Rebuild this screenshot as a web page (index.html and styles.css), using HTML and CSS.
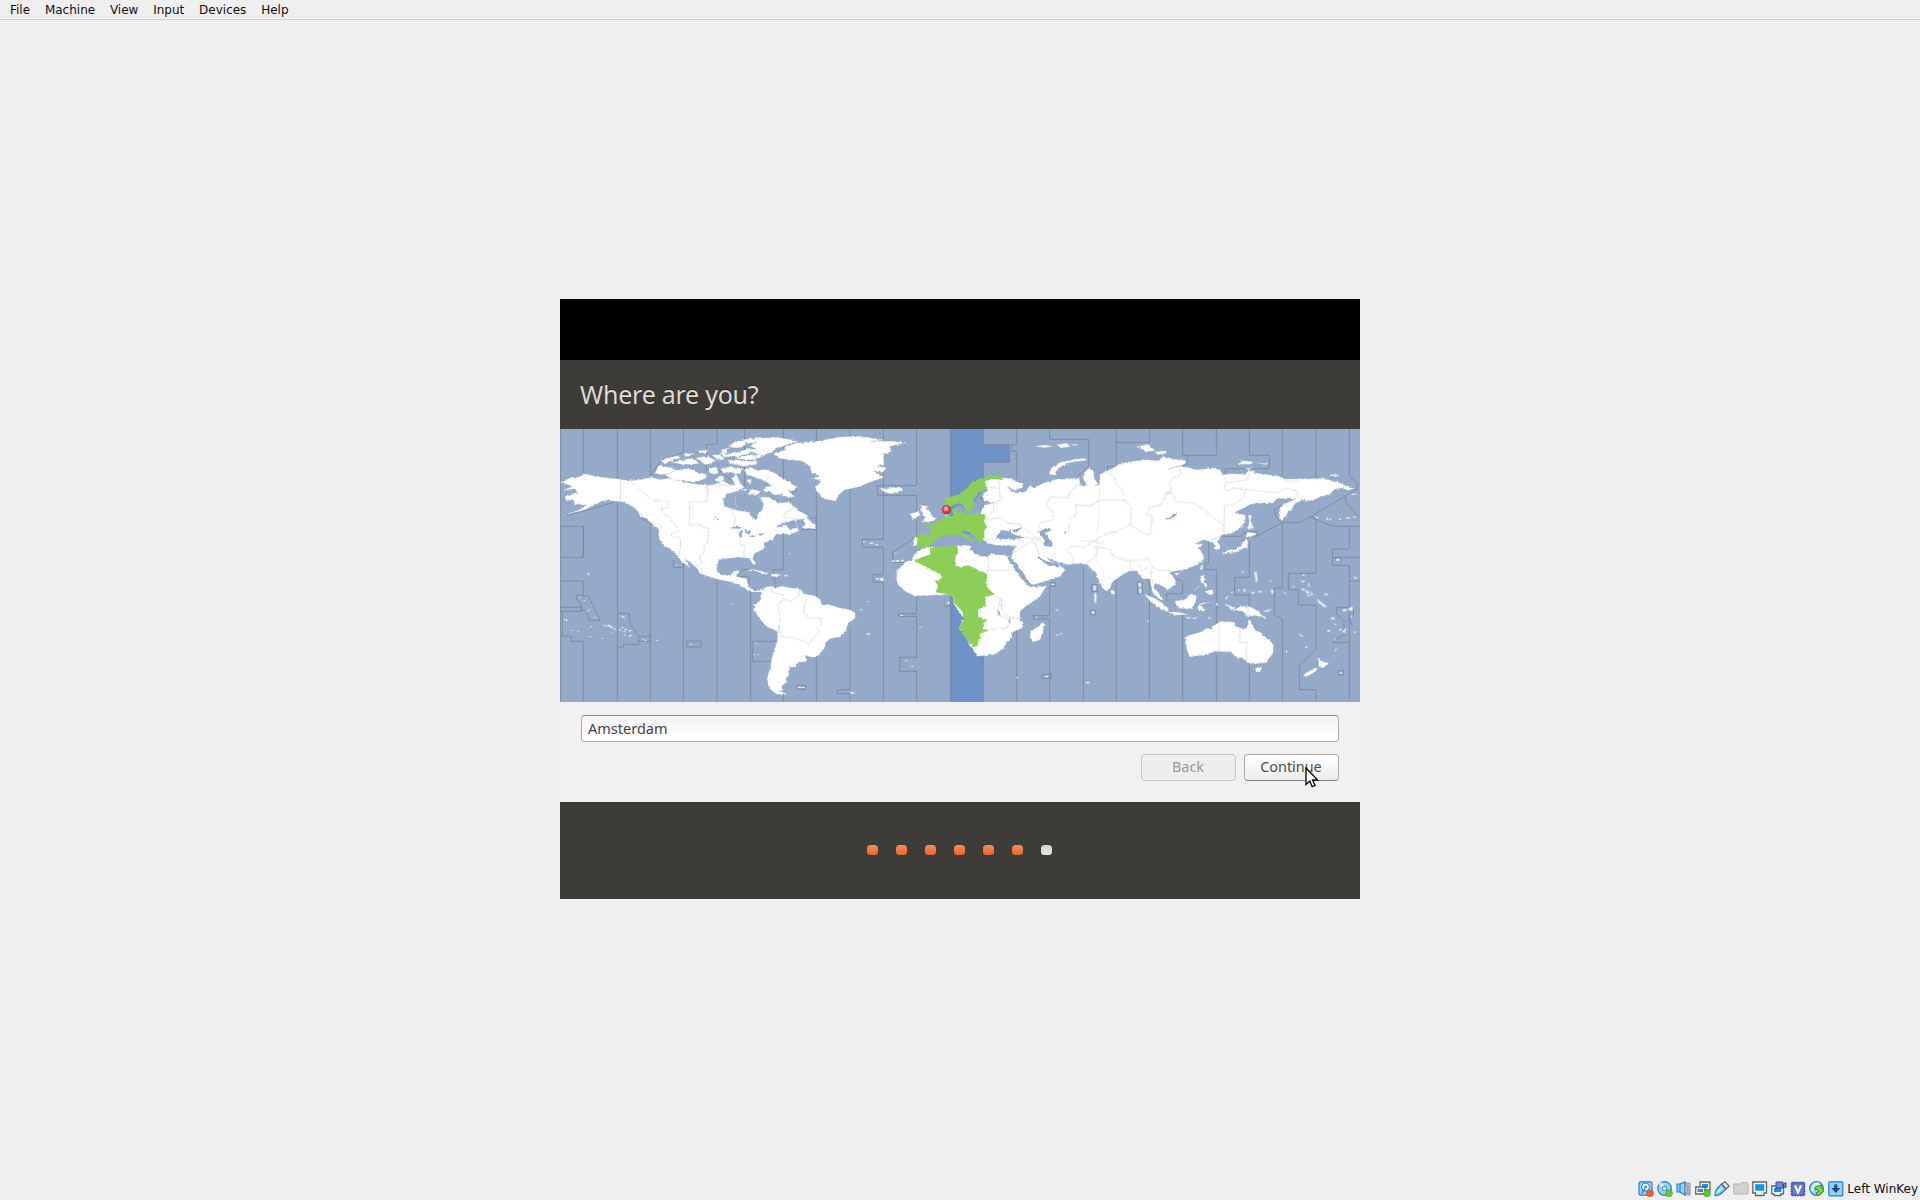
FILE: index.html
```html
<!DOCTYPE html>
<html lang="en">
<head>
<meta charset="utf-8">
<title>Where are you?</title>
<link rel="stylesheet" href="styles.css">
</head>
<body>
<nav class="menubar"><span>File</span><span>Machine</span><span>View</span><span>Input</span><span>Devices</span><span>Help</span></nav>
<main class="workspace">
<section class="guest">
<div class="blank"></div>
<header class="heading"><h1>Where are you?</h1></header>
<svg class="map" width="800" height="273" viewBox="0 3 2400 819">
<defs><filter id="coast" x="-2%" y="-2%" width="104%" height="104%" color-interpolation-filters="sRGB"><feTurbulence type="fractalNoise" baseFrequency=".12" numOctaves="2" seed="4"/><feDisplacementMap in="SourceGraphic" scale="9" xChannelSelector="R" yChannelSelector="G"/></filter></defs>
<rect class="sea" y="3" width="2400" height="820"/>
<path class="zone" d="M1171 0H1270V50H1348V103H1270V823H1171Z"/>
<!-- time zone limits -->
<g class="limits">
<path d="M1171 3V823M1270 3V50M1270 103V823M1270 50H1348V103H1270"/>
<path d="M1 3V823M70 3V140M70 295V388M1 295H70V388H1M1 459H70V503M1 538H64V550H1M7 550V625H34V640H70V823M50 503H84L121 577H88L80 550L64 545V525L50 517ZM172 3V823M172 556H208V584L236 625V649H190V657H172M236 625H271V640H236M271 3V150M271 275V823M271 145L302 98L370 73V3M370 395V823M340 395V418H370M380 639H424V657H380ZM471 3V49H439V125L475 125L525 165M471 455V823M554 3V175M572 490V823M577 640H650M577 640V700H632M670 3V148L710 180L690 205V225M670 315V425H638L646 470M670 790V823M710 772H737V784H710ZM769 3V38M572 425H548L530 445H568V480M5 265L60 252L165 222M750 270H769V304H725M225 240L240 270L300 300"/>
<path d="M769 180V505M769 680V823M870 3V33M870 180V545M870 600V785H832V797H870V823M970 3V35M970 65V334H907V358H970V440H940V463H970V823M1070 3V173H952V202H1070V325L998 373V404H1035M1070 500V557H1016V565H1070V688H1019V730H1070V823M1152 534H1171"/>
<path d="M1370 3V50H1355V70H1370V152M1370 605V823M1469 3V34H1586V115L1553 145V157M1469 475V563H1420V573H1469V823M1469 464H1486V475H1469M1570 415V823M1445 739H1475V751H1445ZM1594 470H1612V490H1594ZM1592 546H1606V561H1592Z"/>
<path d="M1669 3V43H1769V3M1669 43V115H1642V130M1669 445V823M1768 450V823M1868 3V82H1969V3M1868 82H1882V105L1865 118M1868 555V823M1840 450L1868 460V497H1820V520M1732 463H1747V497H1732ZM1969 680V823M1969 600V425H1936V405H1946V340M2068 3V82H2128V122H1996V140M2068 340V448H2024V501H2068V570M2068 705V823M2167 3V145M2167 285V480H2143V560L2167 575V823M2268 3V150M2250 265L2268 275V436H2185V485H2215V531H2268V663L2218 713V785H2268V823M2368 3V145L2392 165V183L2222 283H2167L2080 330M2167 285L2150 270L2142 245L2205 213M2250 265L2317 295H2400M2357 205V222L2394 265M2368 295V363H2317V412H2368V823M2317 389H2400M2368 459H2400M2327 388H2341V400H2327ZM2329 538H2368V575L2378 595M2329 538V558L2352 580V620L2317 643H2368M2380 538V565M2335 728H2350V740H2335ZM1985 325H2040L2060 310L2090 311V325"/>
</g>
<g class="land" filter="url(#coast)">
<!-- North America -->
<path d="M5 163L30 150L55 147L78 138L110 146L150 150L210 158L240 155L275 148L300 155L330 150L365 160L400 167L440 172L470 168L490 158L505 168L525 172L515 150L528 138L540 165L552 178L530 190L500 198L490 215L493 235L530 247L565 253L578 270L590 275L595 257L607 245L611 228L598 206L625 208L640 215L655 226L690 222L700 235L720 250L745 265L735 272L700 277L665 286L650 298L680 291L690 305L712 299L718 309L690 318L668 318L645 322L640 332L612 345L612 362L582 378L578 390L588 408L580 410L567 390L530 388L490 392L474 400L470 425L480 440L510 443L522 430L538 428L530 445L560 453L566 478L585 490L605 484L616 490L612 499L600 492L575 492L545 475L515 463L470 453L420 437L410 420L376 392L388 418L364 400L345 372L315 355L295 330L297 305L270 283L245 262L220 237L190 222L135 216L103 230L70 247L40 254L5 265L60 245L82 230L45 229L40 217L18 217L15 206L52 195L45 182L12 187L35 175Z"/>
<path d="M730 278L738 263L752 282L768 292L765 302L726 300L738 290ZM232 250L250 266L243 270ZM268 279L303 291L306 300L290 296Z"/>
<!-- Arctic archipelago -->
<path d="M285 135L297 113L325 118L348 121L335 134L310 140L295 139ZM317 142L340 129L375 122L403 126L416 136L438 137L438 151L405 163L370 157L340 157ZM302 98L330 88L354 83L361 89L333 98L315 108ZM336 104L365 97L386 92L408 96L417 107L395 109L371 110L350 106ZM369 79L403 76L380 86ZM417 68L443 66L436 76L418 75ZM408 90L440 85L468 96L458 105L437 110L420 99ZM445 124L466 116L475 130L464 139L449 135ZM463 153L482 143L493 150L482 163L467 159ZM484 121L515 116L548 122L540 139L510 132L490 134ZM505 97L530 96L560 100L591 98L590 109L552 115L507 106ZM456 82L480 80L493 93L478 97ZM488 65L507 59L498 75L485 76ZM506 53L530 40L550 35L558 48L540 60L511 58ZM478 74L503 77L530 72L555 77L535 86L490 86ZM525 91L550 85L580 79L590 94L560 95ZM545 35L590 31L650 28L700 36L713 41L680 50L650 61L632 74L610 80L597 91L580 86L600 77L575 73L545 80L532 73L560 64L590 63L570 54L590 43L562 46Z"/>
<path d="M552 125L570 118L590 127L625 125L652 139L663 149L686 161L710 177L700 188L685 189L703 205L687 210L665 199L646 202L625 189L610 192L617 176L638 174L615 158L595 152L580 145L562 142ZM575 184L603 191L590 201L562 197ZM545 185L560 184L556 191ZM616 147L635 146L626 153ZM560 157L574 153L570 170Z"/>
<!-- Greenland and Iceland -->
<path d="M636 76L677 67L675 56L710 45L770 40L840 27L900 25L970 36L930 40L1000 40L1038 44L990 55L993 70L970 80L972 110L950 115L980 119L968 132L939 128L970 148L925 164L895 177L853 185L835 202L827 219L794 213L772 193L765 176L785 160L757 150L782 145L755 135L749 113L723 98L670 95ZM960 180L981 183L1000 178L1026 180L1028 188L994 197L970 192Z"/>
<!-- Caribbean -->
<path d="M558 428L580 424L605 430L625 437L612 438L588 429ZM634 438L652 438L664 443L638 446ZM673 441H683V445H673Z"/>
<!-- South America -->
<path d="M605 488L620 476L638 475L645 481L662 474L690 479L717 482L735 500L765 502L780 513L785 530L808 530L840 540L870 545L886 555L885 571L865 585L857 610L840 628L812 630L796 645L795 659L772 684L755 688L735 682L740 699L708 708L708 717L691 718L685 731L687 742L675 753L682 761L664 773L668 786L656 788L674 795L681 799L650 799L627 781L621 751L632 718L634 700L642 670L652 640L654 611L620 596L600 573L582 548L583 533L603 514Z"/>
<!-- British Isles, Iberian west coast -->
<path d="M1053 257L1076 249L1078 262L1057 276ZM1082 232L1104 235L1097 243L1110 251L1119 268L1130 271L1120 279L1085 282L1097 269L1085 254ZM1063 329L1073 329L1072 353L1059 352Z"/>
<!-- Africa -->
<path d="M1064 377L1080 368L1088 359L1160 354L1200 352L1235 352L1230 366L1245 373L1285 387L1295 374L1345 384L1363 420L1383 450L1410 477L1459 474L1440 506L1400 533L1380 550L1379 576L1389 581L1389 598L1354 614L1356 628L1342 640L1330 662L1300 680L1251 685L1235 658L1215 625L1197 601L1211 571L1182 528L1180 507L1165 499L1125 502L1065 504L1035 490L1010 463L1010 430L1035 403L1055 395ZM1448 583L1454 591L1440 635L1420 642L1410 631L1412 608L1434 596Z"/>
<!-- Western Eurasia -->
<path d="M1280 156L1305 148L1345 151L1390 168L1388 178L1365 187L1350 180L1342 178L1362 195L1395 192L1408 175L1425 178L1450 165L1486 155L1558 151L1562 174L1583 173L1571 157L1571 135L1586 120L1601 130L1602 150L1612 166L1607 174L1630 164L1640 166L1634 152L1623 152L1618 139L1650 135L1700 112L1800 200L1750 420L1710 427L1685 442L1655 464L1652 478L1638 489L1628 480L1617 457L1605 430L1590 420L1583 411L1560 406L1523 410L1495 401L1474 396L1460 388L1468 398L1498 411L1516 426L1499 446L1472 455L1420 470L1411 467L1391 437L1368 405L1353 390L1360 367L1370 355L1330 353L1300 349L1272 345L1262 325L1260 260L1270 232L1300 224L1271 219L1268 200L1284 187L1272 170ZM1466 139L1474 121L1500 103L1545 94L1577 91L1575 98L1530 103L1502 116L1486 133L1490 141Z"/>
<path d="M1652 487L1663 490L1663 499L1654 497Z"/>
</g>
<g class="land" transform="translate(1560)" filter="url(#coast)">
<!-- Eastern Eurasia -->
<path d="M60 140L82 128L100 120L115 110L140 102L200 95L235 98L250 85L275 92L318 98L315 108L262 124L300 115L330 120L352 125L400 120L420 125L427 141L450 137L490 139L510 128L530 136L595 144L615 153L685 153L730 151L775 163L800 175L825 180L805 187L785 180L762 184L750 199L722 206L690 218L665 216L642 228L640 238L625 248L620 262L605 278L597 265L600 240L615 227L648 212L625 210L590 212L580 225L530 225L505 232L465 253L485 260L497 262L495 282L475 305L450 318L425 320L420 334L410 339L420 352L420 364L405 364L403 348L392 342L372 335L345 347L360 348L370 347L355 359L368 377L369 397L350 412L310 425L290 428L280 430L271 431L286 455L286 469L262 487L253 477L226 466L220 478L235 494L250 517L238 514L220 497L214 478L210 452L190 453L170 428L140 430L95 457L50 400Z"/>
<path d="M170 56L203 49L212 59L225 68L195 72L192 65ZM223 73L255 69L260 75L235 80ZM473 104L490 98L522 102L510 109L480 109ZM535 105L563 107L558 110ZM492 121L515 121L506 125ZM750 140H774V143H750ZM505 261L513 263L512 280L520 300L504 303L508 278ZM504 312L519 314L529 319L510 326L498 331L498 322ZM498 332L504 340L502 361L480 365L468 372L430 377L440 367L468 364L485 350ZM426 371L436 377L429 382ZM370 408L366 426L360 422ZM362 443L373 444L372 462L384 471L363 464ZM375 489L398 485L400 497L390 502ZM356 473L341 490L355 477ZM370 465L381 471L378 480ZM283 436L298 434L290 442ZM193 499L220 508L264 539L265 551L245 546L211 520ZM263 552L295 553L325 560L285 561ZM285 519L312 517L335 498L350 505L346 525L335 542L298 541L289 532ZM354 528L389 521L360 532L376 542L366 538L375 549L361 547L357 550ZM408 521L415 528L410 533ZM435 527L453 535L466 543L482 535L510 536L535 549L542 558L560 571L525 562L503 567L488 550L467 547L448 541Z"/>
<!-- Oceania -->
<path d="M316 628L330 621L365 611L380 600L390 605L405 590L425 580L465 583L465 594L490 603L500 600L508 574L518 590L527 609L540 613L580 648L579 675L557 704L530 707L503 704L485 688L475 693L455 673L410 670L370 681L330 686L321 668ZM526 718L546 719L539 731L528 730ZM713 688L727 700L746 706L733 720L719 718ZM714 719L703 733L681 745L670 746L672 739L695 726Z"/>
</g>
<!-- inland and enclosed waters -->
<g class="water" filter="url(#coast)">
<path d="M460 262L478 275L476 281ZM510 301L528 293L548 300L537 302ZM539 310L548 306L542 329L536 323ZM552 306L572 309L570 321L558 315ZM568 326L587 319L583 327ZM592 318L613 316L603 323ZM648 291L680 290L663 298Z"/>
<path d="M1109 357L1130 337L1155 317L1190 316L1227 319L1255 322L1290 352L1299 357L1320 350L1356 354L1350 384L1290 376L1277 388L1243 378L1232 353L1195 352L1140 357ZM1307 332L1323 306L1346 310L1352 305L1358 318L1395 329L1354 334L1325 334ZM1355 307L1387 298L1368 314ZM1436 311L1457 301L1477 307L1454 315L1478 345L1477 356L1449 354L1454 337ZM1513 310L1521 313L1515 319ZM1813 276L1836 264L1849 251L1850 260L1838 270ZM1313 540L1323 565L1314 557ZM1348 568L1353 589L1347 581ZM1341 388L1350 390L1362 400L1380 425L1392 440L1411 470L1402 472L1385 450L1370 430L1350 403ZM1430 388L1438 386L1452 396L1466 401L1484 405L1500 412L1494 420L1480 412L1470 415L1448 402Z"/>
<path d="M1188 238L1200 230L1218 250L1231 250L1242 226L1270 184L1282 187L1260 208L1268 224L1303 223L1265 233L1259 258L1220 258L1190 262Z"/>
</g>
<!-- Anatolia and Italy -->
<g class="land" filter="url(#coast)"><path d="M1275 335L1300 334L1330 333L1355 335L1385 333L1370 354L1330 353L1310 352L1290 345Z"/></g>
<!-- selected zone countries -->
<g class="picked" filter="url(#coast)">
<path d="M1154 211L1193 201L1215 185L1240 160L1270 149L1290 140L1325 145L1325 156L1299 152L1275 160L1280 182L1261 190L1241 212L1243 237L1230 250L1218 250L1208 230L1197 226L1169 237L1155 227ZM1175 246L1188 236L1190 252L1213 251L1209 257L1181 260Z"/>
<path d="M1061 322L1110 321L1113 302L1088 295L1117 289L1156 269L1175 261L1215 259L1238 255L1280 260L1272 280L1280 295L1273 309L1273 333L1260 342L1250 330L1220 310L1203 309L1230 329L1242 342L1238 346L1223 334L1190 319L1152 321L1120 342L1108 358L1075 359L1070 352L1075 328Z"/>
<path d="M1109 361L1150 353L1191 353L1195 374L1187 385L1186 410L1201 417L1225 412L1280 437L1280 473L1303 500L1275 506L1278 534L1253 545L1256 568L1281 575L1279 583L1268 583L1269 603L1288 606L1265 612L1253 655L1238 657L1220 632L1197 600L1209 578L1208 550L1184 528L1180 506L1160 498L1128 493L1133 470L1124 462L1145 451L1144 440L1062 398L1111 378Z"/>
</g>
<!-- borders -->
<g class="borders" filter="url(#coast)">
<path d="M181 150V220M210 157L245 188L275 215L323 221V239L303 240L308 253L329 270L345 292L358 307L335 317L334 325L361 329V360L356 382M523 172H442V221H388V290H426V298L447 300L441 345L432 355V378L420 383L425 405L408 412L428 424M526 205V240L515 255L528 270L520 292L528 296M538 330L542 350L555 355L550 388M690 223L700 240L670 260L678 270L705 272L712 300"/>
<path d="M633 476L638 493L669 500L672 515L690 520L717 504L718 485M669 516L654 530L661 570L654 611M654 590L665 625L700 630L735 640L745 650L760 630L780 610L768 600L785 590V570H747L731 555L735 527L740 510"/>
<path d="M1284 176L1315 182M1272 230L1302 225L1300 250L1273 259M1273 274L1325 270L1340 285L1380 288L1388 304M1315 152L1320 195L1325 215L1302 225M1285 385V427H1365M1285 427L1280 435M1365 425L1410 480M1300 503L1325 515L1325 545L1350 570H1388M1323 505L1310 560L1352 575L1340 600L1290 604M1354 380L1415 338L1428 352L1438 380M1390 325L1440 340L1455 352M1392 300L1432 332L1442 330M1432 320L1440 285L1480 275L1478 250L1460 230L1470 207L1523 210L1530 190L1555 170L1558 153M1541 408L1538 385L1522 370L1530 355L1575 357L1600 342L1633 345M1525 310L1530 270L1550 260L1545 230L1590 235L1620 215L1700 216"/>
<path transform="translate(1560)" d="M78 130L105 150L112 174L130 190L128 217L148 228L155 240L150 290L185 312L210 323L217 265L200 258L208 238L245 230L258 195L270 193L268 165L278 150L305 140L298 120M258 195L275 195L290 222L340 225L365 240L395 265L430 290L432 312L410 330L385 338M432 292L433 232L465 228L490 210L495 185L460 180L445 188L430 180L440 160L430 145M495 184L595 194L610 180L650 188L655 208M510 130L500 155L440 165M617 160H660M0 340L45 338L70 320L110 310L150 290M60 358L90 365L100 385L150 400L205 392L218 415L225 425L270 428M150 400L150 425L165 425M175 410L190 430L205 412M218 415L212 440L220 470M60 358L40 358L55 370L38 395L22 402L35 425M418 590V671M479 598V643H499V704M503 537V567"/>
</g>
<g class="islands">
<path d="M57 506h4v3h-4zM71 516h4v3h-4zM80 548h5v3h-5zM86 543h4v3h-4zM103 566h4v3h-4zM83 435h5v5h-5zM13 573h5v3h-5zM18 575h4v4h-4zM33 606h4v3h-4zM54 610h4v3h-4zM88 624h4v3h-4zM91 595h5v3h-5zM124 630h4v3h-4zM128 590l8 2 5 4-8-1zM143 589l6 3 4 7-9-4zM150 591l7 5 2 7-5-2zM160 599l9 4-3 4zM178 604l9 2-7 3zM186 597h4v3h-4zM194 602l6 2-1 4-6-2zM205 607h9v3h-9zM155 614h4v3h-4zM190 610h5v3h-5zM192 620h5v3h-5zM207 622l9-2-7 8zM180 561l12 5 4 6-9-4zM248 633h5v3h-5zM255 636h4v4h-4zM289 635h4v4h-4zM390 648h5v3h-5zM347 410h4v3h-4zM512 527h4v3h-4zM583 643l9 4-4 1zM582 679h4v3h-4zM593 679h4v3h-4zM714 776h9v4h-9zM725 777h8v3h-8z"/>
<path d="M687 376h4v3h-4zM910 340h4v4h-4zM929 344h10v4h-10zM947 348h6v4h-6zM948 451h8v4h-8zM960 450h10v10l-10-3zM1005 374h5v3h-5zM997 397h6v5h-6zM1007 397h11v4h-11zM1024 395h7v5h-7zM922 519h4v4h-4zM901 543h5v4h-5zM1022 560h6v4h-6zM1079 596h4v4h-4zM920 616h10v4h-10zM1036 696h5v4h-5zM1054 713h5v4h-5zM871 793h11v4h-11zM1162 522h6v5h-6zM1424 55l31-4 24 4-26 4zM1490 50l30-5 10 11-27 4zM1530 50l25-2-10 5zM1476 467h6v4h-6zM1428 567h4v4h-4zM1488 544h5v4h-5zM1488 619h5v4h-5zM1500 615h5v4h-5zM1456 743h8v5h-8zM1370 747h5v4h-5zM1577 762h11v4h-11zM1600 473h7v15h-5zM1603 492l7 8-2 29-5-8zM1596 550h7v7h-7z"/>
<path transform="translate(1560)" d="M175 465h8v12h-6zM178 482h6v14h-5zM201 578h5v4h-5zM485 429h5v4h-5zM523 432h7l3 25-5 8zM474 485h6v4h-6zM490 481l8 5-6 9zM453 491h5v4h-5zM514 492h10v4h-10zM534 489h10v4h-10zM569 457h5v4h-5zM573 484l8 3-3 13-5-8zM612 493h5v4h-5zM638 474h4v4h-4zM667 439h7v4h-7zM660 457l15 1-4 5zM661 481l14 2-3 6zM683 460l7 12-3 7zM675 485l13 7-6 7zM691 487l8 13-5 4zM683 500h6v5h-6zM710 511l12 10 18 15-6 2-19-15zM733 496h10v5h-10zM654 615l16 10-5 2zM676 655h6v5h-6zM617 668h5v5h-5zM753 568h11v6h-11zM787 546l11-3 4 5-13 2zM806 540l13-4-2 11-10 2zM810 565l8-2-3 6zM787 609l12-9-6 18zM742 605h7v6h-7zM778 602h6v5h-6zM765 587h4v4h-4zM763 632l5 4-5 3zM774 655l-9 16-2-3zM768 393h11v6h-11zM708 264l8 7-8 1zM738 270h7v4h-7zM749 272h6v4h-6zM777 271h7v4h-7zM798 268h12v4h-12zM819 267l9-2v4h-9zM435 511l11-10-7 15zM545 551l33-9-14 10zM315 566l22 3-13 3zM338 570l18-4-15 8zM383 569l12-3-9 7zM778 733h9v4h-9zM823 447h6v5h-6zM814 197h14v3h-14zM821 610h6v4h-6z"/>
</g>
<circle class="pin" cx="1159" cy="245" r="12"/><circle class="pin-light" cx="1158" cy="242" r="7"/><path class="needle" d="M1159 259V268"/>
</svg>
<div class="form">
<div class="entry">Amsterdam</div>
<div class="actions"><button class="back" disabled>Back</button><button>Continue<svg class="pointer" width="14" height="22" viewBox="0 0 14 22"><path d="M1 1V17.5L4.8 14L7.2 19.7L10 18.5L7.6 13H12.7Z"/></svg></button></div>
</div>
<footer class="progress"><i></i><i></i><i></i><i></i><i></i><i></i><i class="todo"></i></footer>
</section>
</main>
<footer class="status">
<svg viewBox="0 0 16 16"><rect class="b" x="1" y=".8" width="13" height="13.4" rx="1.5"/><circle class="w" cx="7.5" cy="6" r="4"/><circle class="c" cx="7.5" cy="6" r="1.5"/><path class="l" d="M4 12L7 8"/><circle class="r" cx="12" cy="12.2" r="3.5"/></svg>
<svg viewBox="0 0 16 16"><circle class="b" cx="7.5" cy="7.5" r="6.8"/><path class="shine" d="M7 7L3 2M8 8L12 13"/><circle class="w" cx="7.5" cy="7.5" r="2.2"/><circle class="g" cx="12" cy="12.2" r="3.5"/></svg>
<svg viewBox="0 0 16 16"><path class="m" d="M8 2H14V14H8V12H11V4H8ZM10 6H14M10 9H14M10 12H14"/><path class="b" d="M1 3H4V11H1ZM4 3L9 1V14L4 11Z"/></svg>
<svg viewBox="0 0 16 16"><path class="s" d="M5 1H15V9H5Z"/><path class="c" d="M7 3H13V7H7Z"/><path class="s" d="M.7 6H10V13H.7Z"/><path class="c" d="M2.5 8H8V11H2.5Z"/><circle class="g" cx="12" cy="12.2" r="3.5"/></svg>
<svg viewBox="0 0 16 16"><path class="b" d="M1 14.5C.5 10 3 7.5 7.5 3L12 8C8 12 5 15 1 14.5Z"/><path class="s" d="M8 3L11 .8L15 5L12 8Z"/><path class="shine thin" d="M4 11L8 7"/></svg>
<svg viewBox="0 0 16 16"><path class="folder" d="M.8 13V3H8L9 1.5H14L15 3V13Z"/></svg>
<svg viewBox="0 0 16 16"><path class="s" d="M.8 1H14.5V12H12V14.5H3.5V12H.8Z"/><rect class="c" x="3.2" y="3.2" width="9" height="6.5"/></svg>
<svg viewBox="0 0 16 16"><path class="s" d="M.8 5H12.5V13H10V14.5H3V13H.8Z"/><path class="c" d="M3 7H10.5V11H3Z"/><path class="v" d="M5 1H12V7H5ZM12 3.5L15 1.5V7L12 5Z"/></svg>
<svg viewBox="0 0 16 16"><path class="teeth" d="M3 .5V15.5M5.5 .5V15.5M8 .5V15.5M10.5 .5V15.5M13 .5V15.5M.5 3H15.5M.5 5.5H15.5M.5 8H15.5M.5 10.5H15.5M.5 13H15.5"/><rect class="chip" x="1.8" y="1.8" width="12.4" height="12.4"/><path class="vee" d="M5 4.5L8 11.5L11 4.5"/></svg>
<svg viewBox="0 0 16 16"><circle class="b" cx="7.5" cy="7.5" r="6.8"/><path class="shine" d="M3 10L7 2M4 6L10 2"/><path class="gp" d="M6 6L13 4L12 6L15 10L9 15L7 12L10 10L8 8L6 9Z"/></svg>
<svg viewBox="0 0 16 16"><rect class="b" x=".8" y=".8" width="14" height="14" rx="1"/><path class="arrow" d="M6.2 3.5H9.3V7H12.3L7.8 12L3.3 7H6.2Z"/></svg>
<span>Left WinKey</span>
</footer>
</body>
</html>
```
FILE: styles.css
```css
* { box-sizing: border-box; }
body { margin: 0; height: 1200px; overflow: hidden; display: flex; flex-direction: column; background: #efefef; color: #111; font: 12px "DejaVu Sans", sans-serif; }
.menubar { height: 20px; flex: none; display: flex; gap: 14.8px; padding: 3px 10px 0; line-height: 15px; border-bottom: 1px solid #cfcfcf; }
.workspace { flex: 1; display: flex; justify-content: center; padding-top: 279px; }
.guest { width: 800px; height: 600px; font-family: "Noto Sans", sans-serif; }
.blank { height: 61px; background: #000; }
.heading { height: 69px; padding: 0 20px 2px; background: #3e3c38; display: flex; align-items: center; }
h1 { margin: 0; color: #dfdbd2; font-size: 25px; font-weight: 400; line-height: 34px; letter-spacing: -.25px; text-shadow: 0 -1px #24231f; }
.map { display: block; }
.sea { fill: #95a9c9; }
.zone { fill: #6f92c8; }
.limits { fill: none; stroke: #7b8798; stroke-width: 2.5; }
.land { fill: #fff; stroke: #c4cfd0; stroke-width: 1; }
.water { fill: #91a8cc; }
.picked { fill: #8cce57; }
.borders { fill: none; stroke: #c9d1ce; stroke-width: 2; }
.islands { fill: #f1f5f6; }
.pin { fill: #e2454b; stroke: #b31d25; stroke-width: 3; }
.pin-light { fill: #ff9997; }
.needle { stroke: #ddd; stroke-width: 4; }
.form { height: 100px; padding: 13px 21px 0; background: #f2f1f0; }
.entry { height: 27px; padding: 0 6px; border: 1px solid #aaa; border-top-color: #858585; border-radius: 4px; background: linear-gradient(#f4f4f4, #fff); color: #444; font-size: 14.5px; line-height: 25px; }
.actions { display: flex; justify-content: flex-end; gap: 8px; margin-top: 12px; }
button { position: relative; width: 95px; height: 27px; padding: 0 1px 2px 0; border: 1px solid #aaa; border-bottom-color: #858585; border-radius: 4px; background: linear-gradient(#fff, #ececeb); color: #4c4c4c; font: 14.4px/23px "Noto Sans", sans-serif; }
.back { border-color: #c6c6c6; background: #eee; color: #999; }
.pointer { position: absolute; left: 60px; top: 12px; fill: #fff; stroke: #000; stroke-width: 1.3; }
.progress { height: 97px; background: #3e3c38; display: flex; justify-content: center; gap: 18px; padding-top: 43px; padding-right: 1px; }
.progress i { width: 11px; height: 10px; border-radius: 3.5px; background: linear-gradient(#f98b5e, #e9642f); }
.progress .todo { background: linear-gradient(#d1d1d1, #e8e8e8); }
.status { height: 21px; flex: none; display: flex; justify-content: flex-end; gap: 3.05px; padding: 2px 2px 0 0; }
.status svg { width: 16px; height: 16px; }
.status span { line-height: 17px; }
.b { fill: #8fd3ff; stroke: #257fc4; stroke-width: 1.2; }
.w { fill: #f3fbff; stroke: #257fc4; }
.c { fill: #1691ec; }
.l { fill: none; stroke: #287fc1; stroke-width: 1.5; }
.shine { stroke: #d4f0ff; stroke-width: 3; }
.thin { stroke-width: 1.5; }
.r { fill: #f06138; stroke: #c9441e; stroke-width: .6; }
.g { fill: #66c735; stroke: #3d981f; stroke-width: .6; }
.s { fill: #f7fcff; stroke: #5d6874; stroke-width: 1.3; }
.m { fill: #bbb; stroke: #999; }
.folder { fill: #d3d3d3; stroke: #b3b3b3; }
.v { fill: #7888dc; stroke: #3445a6; }
.teeth { stroke: #4b59b8; stroke-width: 1; }
.chip { fill: #6a7ad6; stroke: #3445a6; }
.vee { fill: none; stroke: #fff; stroke-width: 2; }
.gp { fill: #7cdb36; stroke: #368b1d; }
.arrow { fill: #174b7e; }
```
